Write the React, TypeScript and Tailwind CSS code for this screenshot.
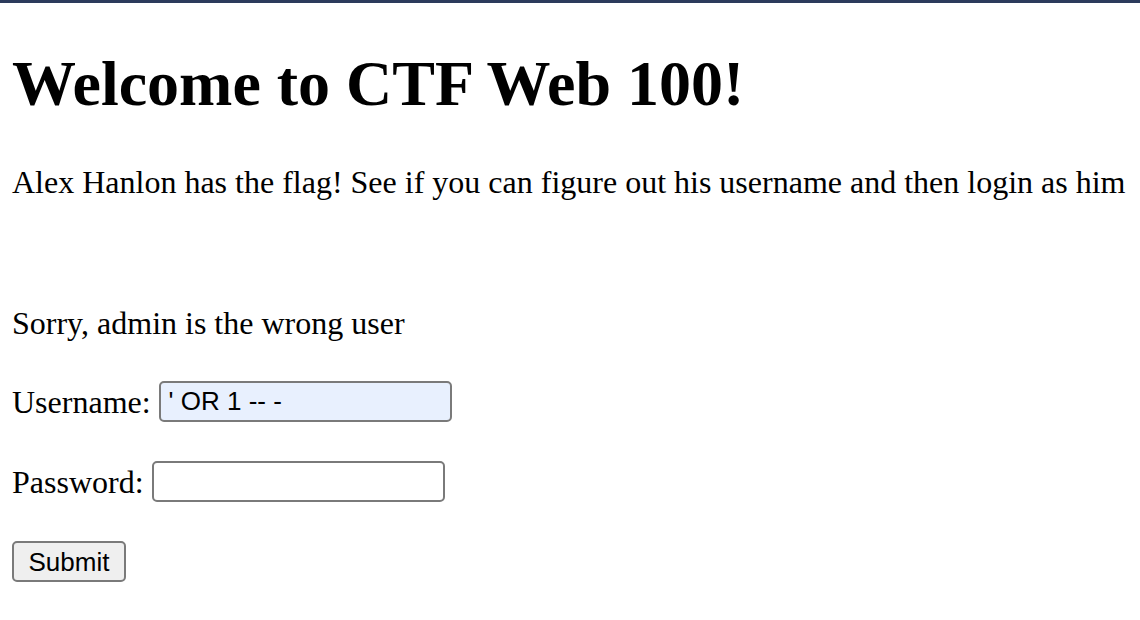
import { useState } from 'react';

export default function App() {
    const [username, setUsername] = useState("' OR 1 -- -");
    const [password, setPassword] = useState('');

    return (
        <div className="min-h-[620px] w-[1140px] bg-white text-black font-['Liberation_Serif','Times_New_Roman',serif]">
            <div className="h-[3px] bg-[#2c3b5c]" />
            <div className="pl-[12px] pt-[44px]">
                <h1 className="text-[64px] leading-[74px] font-bold">Welcome to CTF Web 100!</h1>
                <p className="mt-[43px] text-[32px] leading-[37px]">
                    Alex Hanlon has the flag! See if you can figure out his username and then login as him
                </p>

                <p className="mt-[104px] text-[32px] leading-[37px]">Sorry, admin is the wrong user</p>

                <form className="mt-[39px] flex flex-col gap-[39px]" onSubmit={e => e.preventDefault()}>
                    <div className="flex items-end gap-[8px]">
                        <label className="pb-[4px] text-[32px] leading-[32px]">Username:</label>
                        <input
                            type="text"
                            value={username}
                            onChange={e => setUsername(e.target.value)}
                            className="h-[41px] w-[293px] rounded-[5px] border-2 border-[#7a7a7a] bg-[#e8f0fe] pl-[8px] font-['Liberation_Sans',Arial,sans-serif] text-[26px] text-black outline-none"
                        />
                    </div>
                    <div className="flex items-end gap-[8px]">
                        <label className="pb-[4px] text-[32px] leading-[32px]">Password:</label>
                        <input
                            type="password"
                            value={password}
                            onChange={e => setPassword(e.target.value)}
                            className="h-[41px] w-[293px] rounded-[5px] border-2 border-[#7a7a7a] bg-white pl-[8px] font-['Liberation_Sans',Arial,sans-serif] text-[26px] text-black outline-none"
                        />
                    </div>
                    <div className="flex">
                        <button
                            type="submit"
                            className="h-[41px] w-[114px] rounded-[5px] border-2 border-[#7a7a7a] bg-[#efefef] font-['Liberation_Sans',Arial,sans-serif] text-[26px] text-black"
                        >
                            Submit
                        </button>
                    </div>
                </form>
            </div>
        </div>
    );
}
